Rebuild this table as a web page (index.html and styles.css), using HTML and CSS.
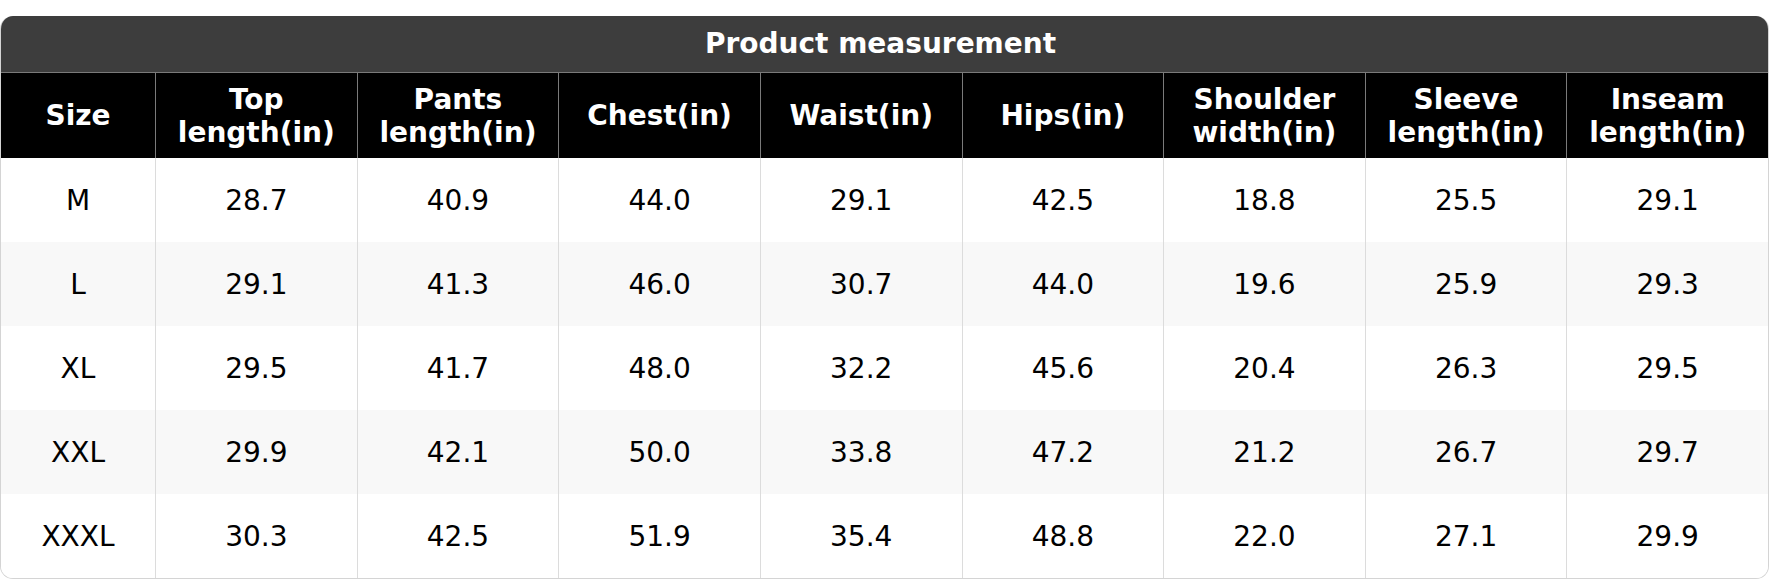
FILE: index.html
```html
<!DOCTYPE html>
<html>
<head>
<meta charset="utf-8">
<link rel="stylesheet" href="styles.css">
</head>
<body>
<div class="page">
  <table class="chart">
    <colgroup>
      <col class="c-size">
      <col><col><col><col><col><col><col><col>
    </colgroup>
    <thead>
      <tr class="title-row"><th colspan="9">Product measurement</th></tr>
      <tr class="head-row">
        <th>Size</th>
        <th>Top<br>length(in)</th>
        <th>Pants<br>length(in)</th>
        <th>Chest(in)</th>
        <th>Waist(in)</th>
        <th>Hips(in)</th>
        <th>Shoulder<br>width(in)</th>
        <th>Sleeve<br>length(in)</th>
        <th>Inseam<br>length(in)</th>
      </tr>
    </thead>
    <tbody>
      <tr><td>M</td><td>28.7</td><td>40.9</td><td>44.0</td><td>29.1</td><td>42.5</td><td>18.8</td><td>25.5</td><td>29.1</td></tr>
      <tr><td>L</td><td>29.1</td><td>41.3</td><td>46.0</td><td>30.7</td><td>44.0</td><td>19.6</td><td>25.9</td><td>29.3</td></tr>
      <tr><td>XL</td><td>29.5</td><td>41.7</td><td>48.0</td><td>32.2</td><td>45.6</td><td>20.4</td><td>26.3</td><td>29.5</td></tr>
      <tr><td>XXL</td><td>29.9</td><td>42.1</td><td>50.0</td><td>33.8</td><td>47.2</td><td>21.2</td><td>26.7</td><td>29.7</td></tr>
      <tr><td>XXXL</td><td>30.3</td><td>42.5</td><td>51.9</td><td>35.4</td><td>48.8</td><td>22.0</td><td>27.1</td><td>29.9</td></tr>
    </tbody>
  </table>
</div>
</body>
</html>
```

FILE: styles.css
```css
html, body {
  margin: 0;
  padding: 0;
  background: #ffffff;
}

.page {
  padding-top: 16px;
  font-family: "DejaVu Sans", "Liberation Sans", sans-serif;
}

.chart {
  width: 1769px;
  table-layout: fixed;
  border-collapse: separate;
  border-spacing: 0;
  border: 1px solid #d4d4d4;
  border-top: none;
  border-radius: 13px;
  overflow: hidden;
  color: #000;
}

.c-size {
  width: 154px;
}

.title-row th {
  height: 54px;
  padding: 0 8px 2px 0;
  background: #3d3d3d;
  color: #fff;
  font-size: 28px;
  font-weight: bold;
  text-align: center;
  border-bottom: 1px solid #7a7a7a;
}

.head-row th {
  height: 85px;
  padding: 0;
  background: #000;
  color: #fff;
  font-size: 28px;
  font-weight: bold;
  line-height: 33px;
  text-align: center;
  border-left: 1px solid #7a7a7a;
}

.head-row th:first-child {
  border-left: none;
}

tbody td {
  height: 84px;
  padding: 0;
  font-size: 28px;
  text-align: center;
  border-left: 1px solid #dcdcdc;
  background: #fff;
}

tbody td:first-child {
  border-left: none;
}

tbody tr:nth-child(even) td {
  background: #f8f8f8;
}
```
